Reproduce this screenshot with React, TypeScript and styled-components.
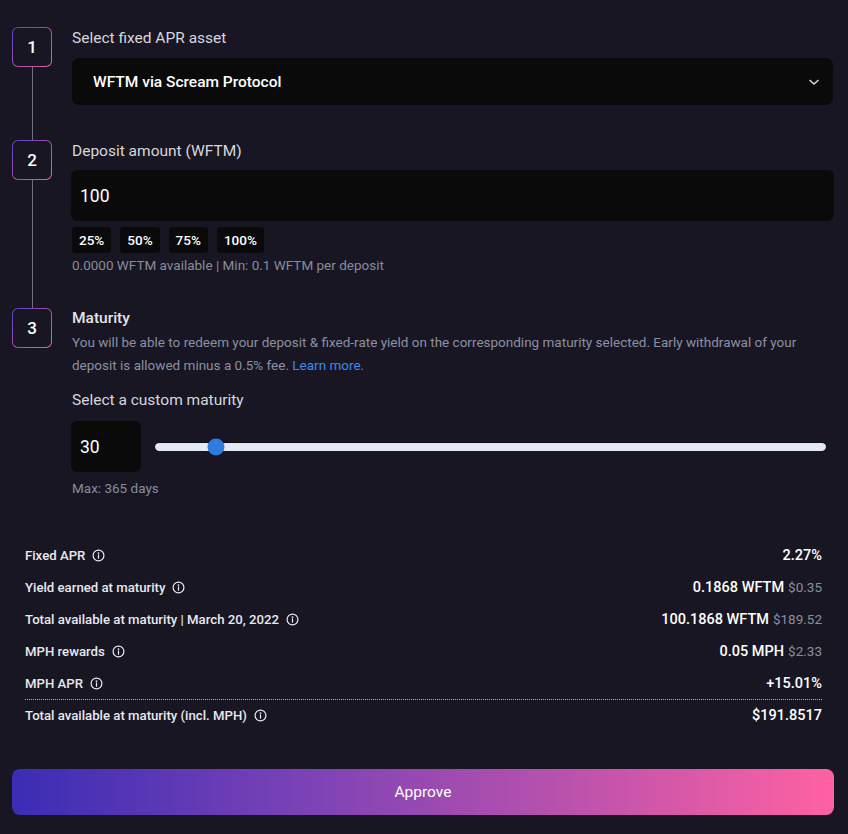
import React from "react";
import styled, { createGlobalStyle } from "styled-components";

const Global = createGlobalStyle`
  html, body { margin: 0; padding: 0; background: #181623; }
  body { font-family: Roboto, "Noto Sans", sans-serif; color: #fff; }
  * { box-sizing: border-box; }
`;

const Page = styled.div`
  width: 848px;
  min-height: 834px;
  background: #181623;
  padding: 27px 15px 0 12px;
`;

const StepRow = styled.div`
  display: grid;
  grid-template-columns: 40px 1fr;
  column-gap: 20px;
`;

const Rail = styled.div`
  display: flex;
  flex-direction: column;
  align-items: center;
`;

const StepBox = styled.div`
  width: 40px;
  height: 40px;
  border-radius: 6px;
  padding: 1px;
  background: linear-gradient(135deg, #5b3ec9 0%, #a24fb0 50%, #ee5f9e 100%);
  flex: none;
`;

const StepInner = styled.div`
  width: 100%;
  height: 100%;
  border-radius: 5px;
  background: #181623;
  display: flex;
  align-items: center;
  justify-content: center;
  font-size: 17px;
  font-weight: 500;
  color: #fff;
`;

const Line = styled.div`
  width: 1px;
  flex: 1;
  background: #6b6f80;
`;

const Content = styled.div<{ $pb: number }>`
  display: flex;
  flex-direction: column;
  min-width: 0;
  padding-bottom: ${(p) => p.$pb}px;
`;

const Label = styled.div`
  font-size: 15.5px;
  line-height: 20px;
  color: #d6d6de;
  padding-top: 1px;
`;

const Title = styled.div`
  font-size: 15.5px;
  line-height: 20px;
  font-weight: 500;
  color: #e4e4ea;
`;

const Select = styled.div`
  margin-top: 10px;
  height: 47px;
  background: #0a0a0b;
  border-radius: 7px;
  display: flex;
  align-items: center;
  justify-content: space-between;
  padding: 0 13px 0 21px;
  font-size: 15.5px;
  font-weight: 500;
  color: #fff;
`;

const Input = styled.div<{ $w?: number }>`
  height: 51px;
  width: ${(p) => (p.$w ? `${p.$w}px` : "auto")};
  margin-left: -1px;
  background: #0a0a0b;
  border-radius: 6px;
  display: flex;
  align-items: center;
  padding-left: 9px;
  font-size: 17.5px;
  color: #fff;
  flex: none;
`;

const AmountInput = styled(Input)`
  margin-top: 9px;
  margin-right: -1px;
`;

const Chips = styled.div`
  display: flex;
  gap: 9px;
  margin-top: 6px;
`;

const Chip = styled.div`
  height: 26px;
  padding: 0 7px;
  background: #0a0a0b;
  border-radius: 3px;
  display: flex;
  align-items: center;
  font-size: 13.5px;
  font-weight: 500;
  color: #fff;
`;

const Help = styled.div<{ $mt: number }>`
  font-size: 13.5px;
  line-height: 18px;
  color: #878c9c;
  margin-top: ${(p) => p.$mt}px;
`;

const Para = styled.p`
  margin: 3px 0 0;
  font-size: 13.5px;
  line-height: 23px;
  color: #8b90a1;
`;

const LinkText = styled.span`
  color: #3f8ae6;
`;

const SubLabel = styled(Label)`
  margin-top: 12px;
`;

const SliderRow = styled.div`
  display: flex;
  align-items: center;
  gap: 14px;
  margin-top: 11px;
`;

const Track = styled.div`
  position: relative;
  flex: 1;
  height: 9px;
  margin-right: 7px;
  border-radius: 5px;
  background: #e3e9f4;
  border-top: 1px solid #0c0c10;
`;

const Thumb = styled.div`
  position: absolute;
  top: 50%;
  width: 17px;
  height: 17px;
  border-radius: 50%;
  background: #2e7be0;
  transform: translate(-50%, -50%);
`;

const Summary = styled.div`
  margin-top: 42px;
  padding: 0 11px 0 13px;
  display: flex;
  flex-direction: column;
`;

const Row = styled.div<{ $sep?: boolean }>`
  display: flex;
  justify-content: space-between;
  align-items: center;
  height: 32px;
  ${(p) => (p.$sep ? "border-top: 1px dotted rgba(230,230,240,0.75);" : "")}
`;

const RowLabel = styled.div`
  display: flex;
  align-items: center;
  gap: 7px;
  font-size: 13.2px;
  font-weight: 500;
  color: #e8e8ee;
`;

const Value = styled.div`
  font-size: 14.5px;
  font-weight: 500;
  color: #fff;
`;

const Usd = styled.span`
  font-size: 13.5px;
  font-weight: 400;
  color: #8a8f9d;
  margin-left: 4px;
`;

const Approve = styled.button`
  margin-top: 38px;
  width: 822px;
  height: 46px;
  border: none;
  border-radius: 8px;
  background: linear-gradient(90deg, #3a2db4 0%, #7a42b6 35%, #b551ad 65%, #ff61a2 100%);
  color: #fff;
  font-family: inherit;
  font-size: 15.5px;
  font-weight: 400;
  display: block;
`;

const Info = () => (
  <svg width="13" height="13" viewBox="0 0 24 24" fill="none" stroke="#ececf2" strokeWidth="2.2" strokeLinecap="round">
    <circle cx="12" cy="12" r="10" />
    <line x1="12" y1="11" x2="12" y2="17" />
    <circle cx="12" cy="7.5" r="0.6" fill="#ececf2" />
  </svg>
);

const Chevron = () => (
  <svg width="12" height="8" viewBox="0 0 12 8" fill="none" stroke="#d8d8e4" strokeWidth="1.5">
    <path d="M1.5 2 L6 6 L10.5 2" />
  </svg>
);

const rows: { label: string; value: string; usd?: string; sep?: boolean }[] = [
  { label: "Fixed APR", value: "2.27%" },
  { label: "Yield earned at maturity", value: "0.1868 WFTM", usd: "$0.35" },
  { label: "Total available at maturity | March 20, 2022", value: "100.1868 WFTM", usd: "$189.52" },
  { label: "MPH rewards", value: "0.05 MPH", usd: "$2.33" },
  { label: "MPH APR", value: "+15.01%" },
  { label: "Total available at maturity (incl. MPH)", value: "$191.8517", sep: true },
];

export default function App() {
  return (
    <Page>
      <Global />
      <StepRow>
        <Rail>
          <StepBox><StepInner>1</StepInner></StepBox>
          <Line />
        </Rail>
        <Content $pb={35}>
          <Label>Select fixed APR asset</Label>
          <Select>
            <span>WFTM via Scream Protocol</span>
            <Chevron />
          </Select>
        </Content>
      </StepRow>
      <StepRow>
        <Rail>
          <StepBox><StepInner>2</StepInner></StepBox>
          <Line />
        </Rail>
        <Content $pb={34}>
          <Label>Deposit amount (WFTM)</Label>
          <AmountInput>100</AmountInput>
          <Chips>
            <Chip>25%</Chip>
            <Chip>50%</Chip>
            <Chip>75%</Chip>
            <Chip>100%</Chip>
          </Chips>
          <Help $mt={3}>0.0000 WFTM available | Min: 0.1 WFTM per deposit</Help>
        </Content>
      </StepRow>
      <StepRow>
        <Rail>
          <StepBox><StepInner>3</StepInner></StepBox>
        </Rail>
        <Content $pb={0}>
          <Title>Maturity</Title>
          <Para>
            You will be able to redeem your deposit &amp; fixed-rate yield on the corresponding maturity selected. Early withdrawal of your deposit is allowed minus a 0.5% fee. <LinkText>Learn more.</LinkText>
          </Para>
          <SubLabel>Select a custom maturity</SubLabel>
          <SliderRow>
            <Input $w={70}>30</Input>
            <Track>
              <Thumb style={{ left: `${(30 / 365) * 100 + 0.9}%` }} />
            </Track>
          </SliderRow>
          <Help $mt={7}>Max: 365 days</Help>
        </Content>
      </StepRow>
      <Summary>
        {rows.map((r) => (
          <Row key={r.label} $sep={r.sep}>
            <RowLabel>
              {r.label}
              <Info />
            </RowLabel>
            <Value>
              {r.value}
              {r.usd && <Usd>{r.usd}</Usd>}
            </Value>
          </Row>
        ))}
      </Summary>
      <Approve>Approve</Approve>
    </Page>
  );
}
